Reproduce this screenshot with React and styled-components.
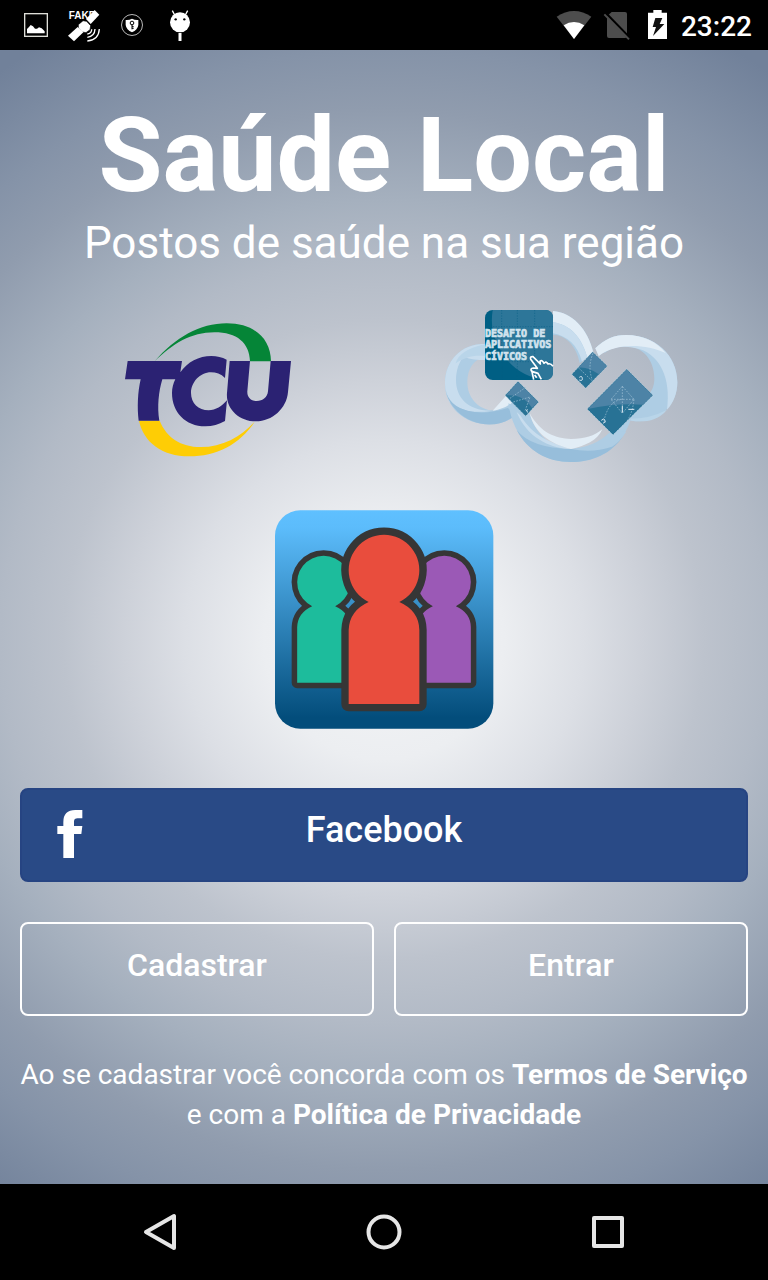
import React from "react";
import styled, { createGlobalStyle } from "styled-components";

const GlobalStyle = createGlobalStyle`
  * { box-sizing: border-box; }
  body {
    margin: 0;
    font-family: Roboto, "Liberation Sans", sans-serif;
    color: #fff;
    background: #000;
  }
`;

const Page = styled.div`
  min-height: 100vh;
  display: flex;
  flex-direction: column;
`;

const StatusBar = styled.header`
  height: 50px;
  padding: 0 16px 0 20px;
  display: flex;
  align-items: center;
  justify-content: space-between;
  background: #000;
`;

const StatusGroup = styled.div`
  display: flex;
  align-items: center;
  gap: ${(p) => p.$gap}px;

  svg {
    display: block;
    overflow: visible;
  }
`;

const Clock = styled.time`
  padding-top: 4px;
  font-size: 28px;
  line-height: 32px;
  font-weight: 500;
`;

const Screen = styled.main`
  flex: 1;
  display: flex;
  flex-direction: column;
  align-items: center;
  padding: 48px 20px 49px;
  background: radial-gradient(
    circle at 50% 52%,
    #f4f5f7 0,
    #eceef1 120px,
    #dcdfe5 200px,
    #cdd1d9 260px,
    #bdc3cd 320px,
    #b2bac6 384px,
    #a5b0be 440px,
    #909cae 530px,
    #8593a8 590px,
    #71819a 686px
  );
`;

const Title = styled.h1`
  margin: 0;
  font-size: 104px;
  line-height: 116px;
  font-weight: 700;
  white-space: nowrap;
`;

const Subtitle = styled.p`
  margin: 0;
  font-size: 44px;
  line-height: 58px;
  font-weight: 400;
  white-space: nowrap;
`;

const Partners = styled.div`
  align-self: stretch;
  display: grid;
  grid-template-columns: 1fr 1fr;
  place-items: center;
  margin-top: 28px;
  padding: 0 12px;

  svg { display: block; }
`;

const AppIcon = styled.svg`
  display: block;
  margin-top: 35px;
`;

const Actions = styled.div`
  align-self: stretch;
  display: grid;
  grid-template-columns: 1fr 1fr;
  gap: 40px 20px;
  margin-top: 58px;
`;

const Button = styled.button`
  height: 94px;
  padding: 0 0 8px;
  border: 2px solid #fff;
  border-radius: 8px;
  background: transparent;
  color: #fff;
  font-family: inherit;
  font-size: 32px;
  font-weight: 500;
  cursor: pointer;
`;

const FacebookButton = styled(Button)`
  grid-column: 1 / -1;
  display: grid;
  grid-template-columns: 94px 1fr 94px;
  align-items: center;
  padding-bottom: 10px;
  border-color: #264482;
  background: #294a86;
  font-size: 36px;

  svg {
    display: block;
    margin: 8px 0 0 35px;
  }
`;

const Terms = styled.p`
  margin: 39px 0 0;
  font-size: 28px;
  line-height: 40px;
  text-align: center;
`;

const TermsLink = styled.a`
  color: inherit;
  font-weight: 700;
  text-decoration: none;
`;

const NavBar = styled.nav`
  height: 96px;
  display: flex;
  align-items: center;
  justify-content: center;
  gap: 128px;
  background: #000;
`;

const NavButton = styled.button`
  width: 96px;
  height: 96px;
  padding: 0;
  border: 0;
  display: grid;
  place-items: center;
  background: transparent;
  cursor: pointer;
`;

const PictureIcon = () => (
  <svg width="32" height="32" viewBox="0 0 96 96" aria-hidden="true">
    <rect x="14" y="14" width="68" height="68" fill="none" stroke="#deded8" strokeWidth="4" />
    <path d="M21 73V60l6-6 5-6 7 4 6 7h6l6-4 8 3 9 9v6Z" fill="#fff" />
  </svg>
);

const SatelliteIcon = () => (
  <svg width="32" height="32" viewBox="0 0 96 96" aria-hidden="true">
    <text x="2" y="29" fill="#fff" fontFamily="Liberation Sans, sans-serif" fontSize="30" fontWeight="700">FAKE</text>
    <path d="M54 30 80 3 94 17 68 45Z" fill="#fff" />
    <path d="M31 47 45 35l11 2 12 13-2 12-12 9-12-2-11-12Z" fill="#fff" stroke="#000" strokeWidth="2" />
    <path d="M0 80 29 54l17 16-28 27Z" fill="#fff" />
    <path d="M58 75q13-1 13-14M58 85q22-3 23-25M58 96q34-3 36-36" fill="none" stroke="#fff" strokeWidth="4" />
  </svg>
);

const ShieldIcon = () => (
  <svg width="32" height="32" viewBox="0 0 96 96" aria-hidden="true">
    <circle cx="48" cy="48" r="31.500" fill="none" stroke="#ddd" strokeWidth="2.500" />
    <path d="M48 29q9 5 19 4v15q-2 15-19 22-17-7-19-22V33q10 1 19-4Z" fill="#fff" />
    <circle cx="48" cy="42" r="5.500" fill="none" stroke="#000" strokeWidth="3" />
    <path d="M48 47v14M48 53h5M48 58h5" stroke="#000" strokeWidth="3" />
  </svg>
);

const DroidIcon = () => (
  <svg width="32" height="32" viewBox="0 0 96 96" aria-hidden="true">
    <circle cx="48" cy="40" r="30" fill="#fff" />
    <path d="m32 18-7-13M64 18l7-13" stroke="#fff" strokeWidth="4" />
    <circle cx="35" cy="31" r="3.500" />
    <circle cx="61" cy="31" r="3.500" />
    <path d="M48 72v24" stroke="#fff" strokeWidth="9" />
  </svg>
);

const WifiIcon = () => (
  <svg width="36" height="32" viewBox="75 27 108 96" aria-label="Wi-Fi">
    <path d="M80 50Q105 33 132 33t52 17l-52 67Z" fill="#4d4d4d" />
    <path d="M101 76q15-10 31-10t31 10l-31 41Z" fill="#fff" />
  </svg>
);

const NoSimIcon = () => (
  <svg width="30" height="32" viewBox="219 27 90 96" aria-label="Sem SIM">
    <path d="m231 49 14-13h40q6 0 6 6v66q0 6-6 6h-48q-6 0-6-6Z" fill="#4d4d4d" />
    <path d="m226 38 74 76" stroke="#000" strokeWidth="7" />
    <path d="m223 43 74 75" stroke="#4d4d4d" strokeWidth="6" />
  </svg>
);

const BatteryIcon = () => (
  <svg width="24" height="32" viewBox="345 27 72 96" aria-label="Carregando">
    <path d="M354 38h16v-8h25v8h16v79h-57Z" fill="#fff" />
    <path d="M376 54h21l-8 18h14l-34 36 9-27h-10Z" fill="#111" />
  </svg>
);

const TcuLogo = () => (
  <svg width="200" height="160" viewBox="-6 -7 600 480" role="img" aria-label="TCU">
    <path d="M134 153C195 82 270 39 350 39c82 0 132 45 133 114h-63c-2-55-38-87-107-87-70 0-124 34-179 87Z" fill="#058537" />
    <path d="M87 331h62c20 50 63 79 123 79 66 0 119-30 162-76-45 69-116 104-196 104-83 0-137-43-151-107Z" fill="#fecd05" />
    <path d="M53 152H216L211 186C232 155 267 137 304 137C321 137 336 141 350 148L345 203C333 191 318 186 303 186C270 186 243 216 243 248C243 278 265 300 296 300C317 300 336 287 351 270L345 332C326 342 308 348 286 348C226 348 186 305 186 248C186 233 190 219 196 207H157C146 243 141 289 148 331H86C81 292 83 246 92 207H45Z" fill="#2b2273" />
    <path d="M359 152H420L412 243C411 261 422 272 440 272C459 272 472 261 474 243L482 152H543L534 245C530 295 486 333 438 333C386 333 347 294 351 248Z" fill="#2b2273" />
  </svg>
);

const DesafioLogo = () => (
  <svg width="260" height="175" viewBox="0 0 780 525" role="img" aria-label="Desafio de Aplicativos Cívicos">
    <path d="M165 132C96 130 45 181 45 250c0 72 59 123 130 123 43 0 77-16 99-43l-31-41c-14 27-31 42-59 42-43-5-72-41-72-85 0-40 20-69 53-76Z" fill="#aecde4" />
    <path d="M165 132C96 130 45 181 45 250c0 20 4 38 13 55 40 31 80 35 126 27-73 1-106-42-106-91 0-29 8-54 23-71 20 8 43 10 64 10Z" fill="#c8ddee" />
    <path d="M77 190q10-40 88-57v35c-34-4-60 3-88 22Z" fill="#b9d5e9" />
    <path d="M47 270q10 48 66 62 51 14 120-8l28 17c-54 51-135 36-178-6-21-20-33-43-36-65Z" fill="#97bedb" />
    <path d="m188 332 43-48 20 20q-24 23-63 28Z" fill="#e2edf6" />
    <path d="M369 33c57 4 105 54 121 124l-41 32c-9-51-43-85-80-85Z" fill="#aecde4" />
    <path d="M369 33c57 4 105 54 121 124l-18 16c-18-66-53-98-103-106Z" fill="#e2edf6" />
    <path d="M369 66c53 10 82 41 103 105l-16 14c-14-51-44-77-87-85Z" fill="#c8ddee" />
    <path d="M496 145c27-27 57-40 92-40 87 0 154 60 154 142 0 68-54 117-113 117-20 0-32-4-42-8l62-65c15-14 24-31 24-55 0-56-34-98-91-98-21 0-39 6-57 20Z" fill="#aecde4" />
    <path d="M496 145c27-27 57-40 92-40 87 0 154 60 154 142 0 31-11 62-31 82 13-95-22-162-81-181-44-14-86-10-123 20Z" fill="#c8ddee" />
    <path d="M496 145c27-27 57-40 92-40 49 0 93 20 119 54-64-29-151-30-201 9Z" fill="#e2edf6" />
    <path d="M587 356q72 2 124-27c-23 28-50 35-82 35q-26 0-42-8Z" fill="#b9d5e9" />
    <path d="M235 310c15 104 83 176 187 176 91 0 157-52 181-130l-65 43c-27 27-60 48-115 48-61 0-106-45-125-107Z" fill="#aecde4" />
    <path d="M260 390q42 54 163 57 96 7 157-40c-36 55-93 79-158 79-72 0-129-34-162-96Z" fill="#97bedb" />
    <path d="M422 446q61 15 124-6 22-12 42-44-25-7-50 3-48 44-116 47Z" fill="#aecde4" />
    <path d="M270 345c42 66 89 82 153 102-67-1-135-39-163-111Z" fill="#c8ddee" />
    <path d="M299 340c35 61 77 75 124 77 42-1 70-9 94-29-15 34-52 50-94 59-61-14-110-48-124-107Z" fill="#e2edf6" />
    <rect x="165" y="30" width="204" height="210" rx="23" fill="#005f84" />
    <path d="M188 30h158q23 0 23 23v164q0 23-23 23-105-14-148-116-18-43-10-94Z" fill="#2d7699" />
    <path d="M215 30v210M262 30v210M314 30v210M165 80h204M165 185h204" stroke="#075f85" strokeWidth="1.500" strokeDasharray="4 4" />
    <g fill="#d2e3ee" stroke="#d2e3ee" strokeWidth="2" fontFamily="DejaVu Sans Mono, monospace" fontSize="30" fontWeight="700">
      <text x="165" y="111">DESAFIO DE</text>
      <text x="165" y="145">APLICATIVOS</text>
      <text x="165" y="179">CÍVICOS</text>
    </g>
    <path d="m334 238-10-18-19-6q-6-9 5-10l12 1-20-27q-3-9 7-8l22 22-1-8q4-5 9 1l3 5q6-8 12 2 8-3 15 7M305 211l6 28M314 225l6 8" fill="none" stroke="#fff" strokeWidth="5" strokeLinejoin="round" />
    <g stroke="#d2e3ee" strokeWidth="2" strokeDasharray="4 3">
      <path d="m488 155 44 43-65 67-42-42Z" fill="#287295" />
      <path d="m264 244 62 62-39 43-62-63Z" fill="#287295" />
      <path d="m590 207 79 79-120 119-78-78Z" fill="#287295" />
    </g>
    <path d="m590 209 77 77-28 28q-87-5-166 13Z" fill="#4d83a6" />
    <path d="m488 157 42 41-23 25q-35-24-62-20Z" fill="#4d83a6" />
    <path d="m264 246 60 60-18 18q-25-42-78-38Z" fill="#4d83a6" />
    <g fill="none" stroke="#a6c6da" strokeWidth="2" strokeDasharray="5 4">
      <path d="m577 259-34 39 34 42 35-42ZM577 259v81M543 298h69M520 372q12-70 57-74M612 298q-6 55-34 80M489 160q-17 40-2 80M445 203l42 40M240 295l50-35M250 306l50-15-15 42" />
    </g>
    <path d="M448 232q8-6 9 3t-9 5M292 328q-6 6 2 9M514 361q8-8 11 0t-4 6M577 318v20M595 328h18" fill="none" stroke="#e2edf6" strokeWidth="3" />
  </svg>
);

const personPath =
  "M314 306A106 106 0 1 1 406 306Q465 332 466 390V612H254V390Q256 332 314 306Z";

const Person = ({ fill, transform }) => (
  <g transform={transform}>
    <path d={personPath} fill={fill} stroke="#363636" strokeWidth="44" strokeLinejoin="round" />
    <path d={personPath} fill={fill} />
  </g>
);

const SaudeLocalIcon = () => (
  <AppIcon width="220" height="220" viewBox="30 30 660 660" role="img" aria-label="Saúde Local">
    <defs>
      <linearGradient id="sky" x1="0" y1="0" x2="0" y2="1">
        <stop offset="0" stopColor="#5fc0ff" />
        <stop offset="0.080" stopColor="#5cbcfb" />
        <stop offset="0.950" stopColor="#034d7b" />
        <stop offset="1" stopColor="#034d7b" />
      </linearGradient>
    </defs>
    <rect x="33" y="31" width="655" height="655" rx="76" fill="url(#sky)" />
    <Person fill="#1dbc9c" transform="translate(-91 89) scale(0.750)" />
    <Person fill="#9b59b6" transform="translate(271 89) scale(0.750)" />
    <Person fill="#e94d3d" />
  </AppIcon>
);

const FacebookGlyph = () => (
  <svg width="28" height="50" viewBox="0 0 84 150" aria-hidden="true">
    <path d="M19 147V75H1V51h18V39Q19 3 55 3h21v25H62q-11 0-11 10v13h25l-3 24H51v72Z" fill="#fff" />
  </svg>
);

export default function App() {
  return (
    <Page>
      <GlobalStyle />
      <StatusBar>
        <StatusGroup $gap={16}>
          <PictureIcon />
          <SatelliteIcon />
          <ShieldIcon />
          <DroidIcon />
        </StatusGroup>
        <StatusGroup $gap={12}>
          <WifiIcon />
          <NoSimIcon />
          <BatteryIcon />
          <Clock>23:22</Clock>
        </StatusGroup>
      </StatusBar>
      <Screen>
        <Title>Saúde Local</Title>
        <Subtitle>Postos de saúde na sua região</Subtitle>
        <Partners>
          <TcuLogo />
          <DesafioLogo />
        </Partners>
        <SaudeLocalIcon />
        <Actions>
          <FacebookButton type="button">
            <FacebookGlyph />
            <span>Facebook</span>
          </FacebookButton>
          <Button type="button">Cadastrar</Button>
          <Button type="button">Entrar</Button>
        </Actions>
        <Terms>
          Ao se cadastrar você concorda com os <TermsLink href="#termos">Termos de Serviço</TermsLink> e com a{" "}
          <TermsLink href="#privacidade">Política de Privacidade</TermsLink>
        </Terms>
      </Screen>
      <NavBar>
        <NavButton type="button" aria-label="Voltar">
          <svg width="40" height="40" viewBox="0 0 40 40" fill="none" stroke="#e6e6e6" strokeWidth="4" strokeLinejoin="round">
            <path d="M34 4v32L6 20Z" />
          </svg>
        </NavButton>
        <NavButton type="button" aria-label="Início">
          <svg width="40" height="40" viewBox="0 0 40 40" fill="none" stroke="#e6e6e6" strokeWidth="4">
            <circle cx="20" cy="20" r="15.500" />
          </svg>
        </NavButton>
        <NavButton type="button" aria-label="Recentes">
          <svg width="40" height="40" viewBox="0 0 40 40" fill="none" stroke="#e6e6e6" strokeWidth="4" strokeLinejoin="round">
            <rect x="6" y="6" width="28" height="28" />
          </svg>
        </NavButton>
      </NavBar>
    </Page>
  );
}
